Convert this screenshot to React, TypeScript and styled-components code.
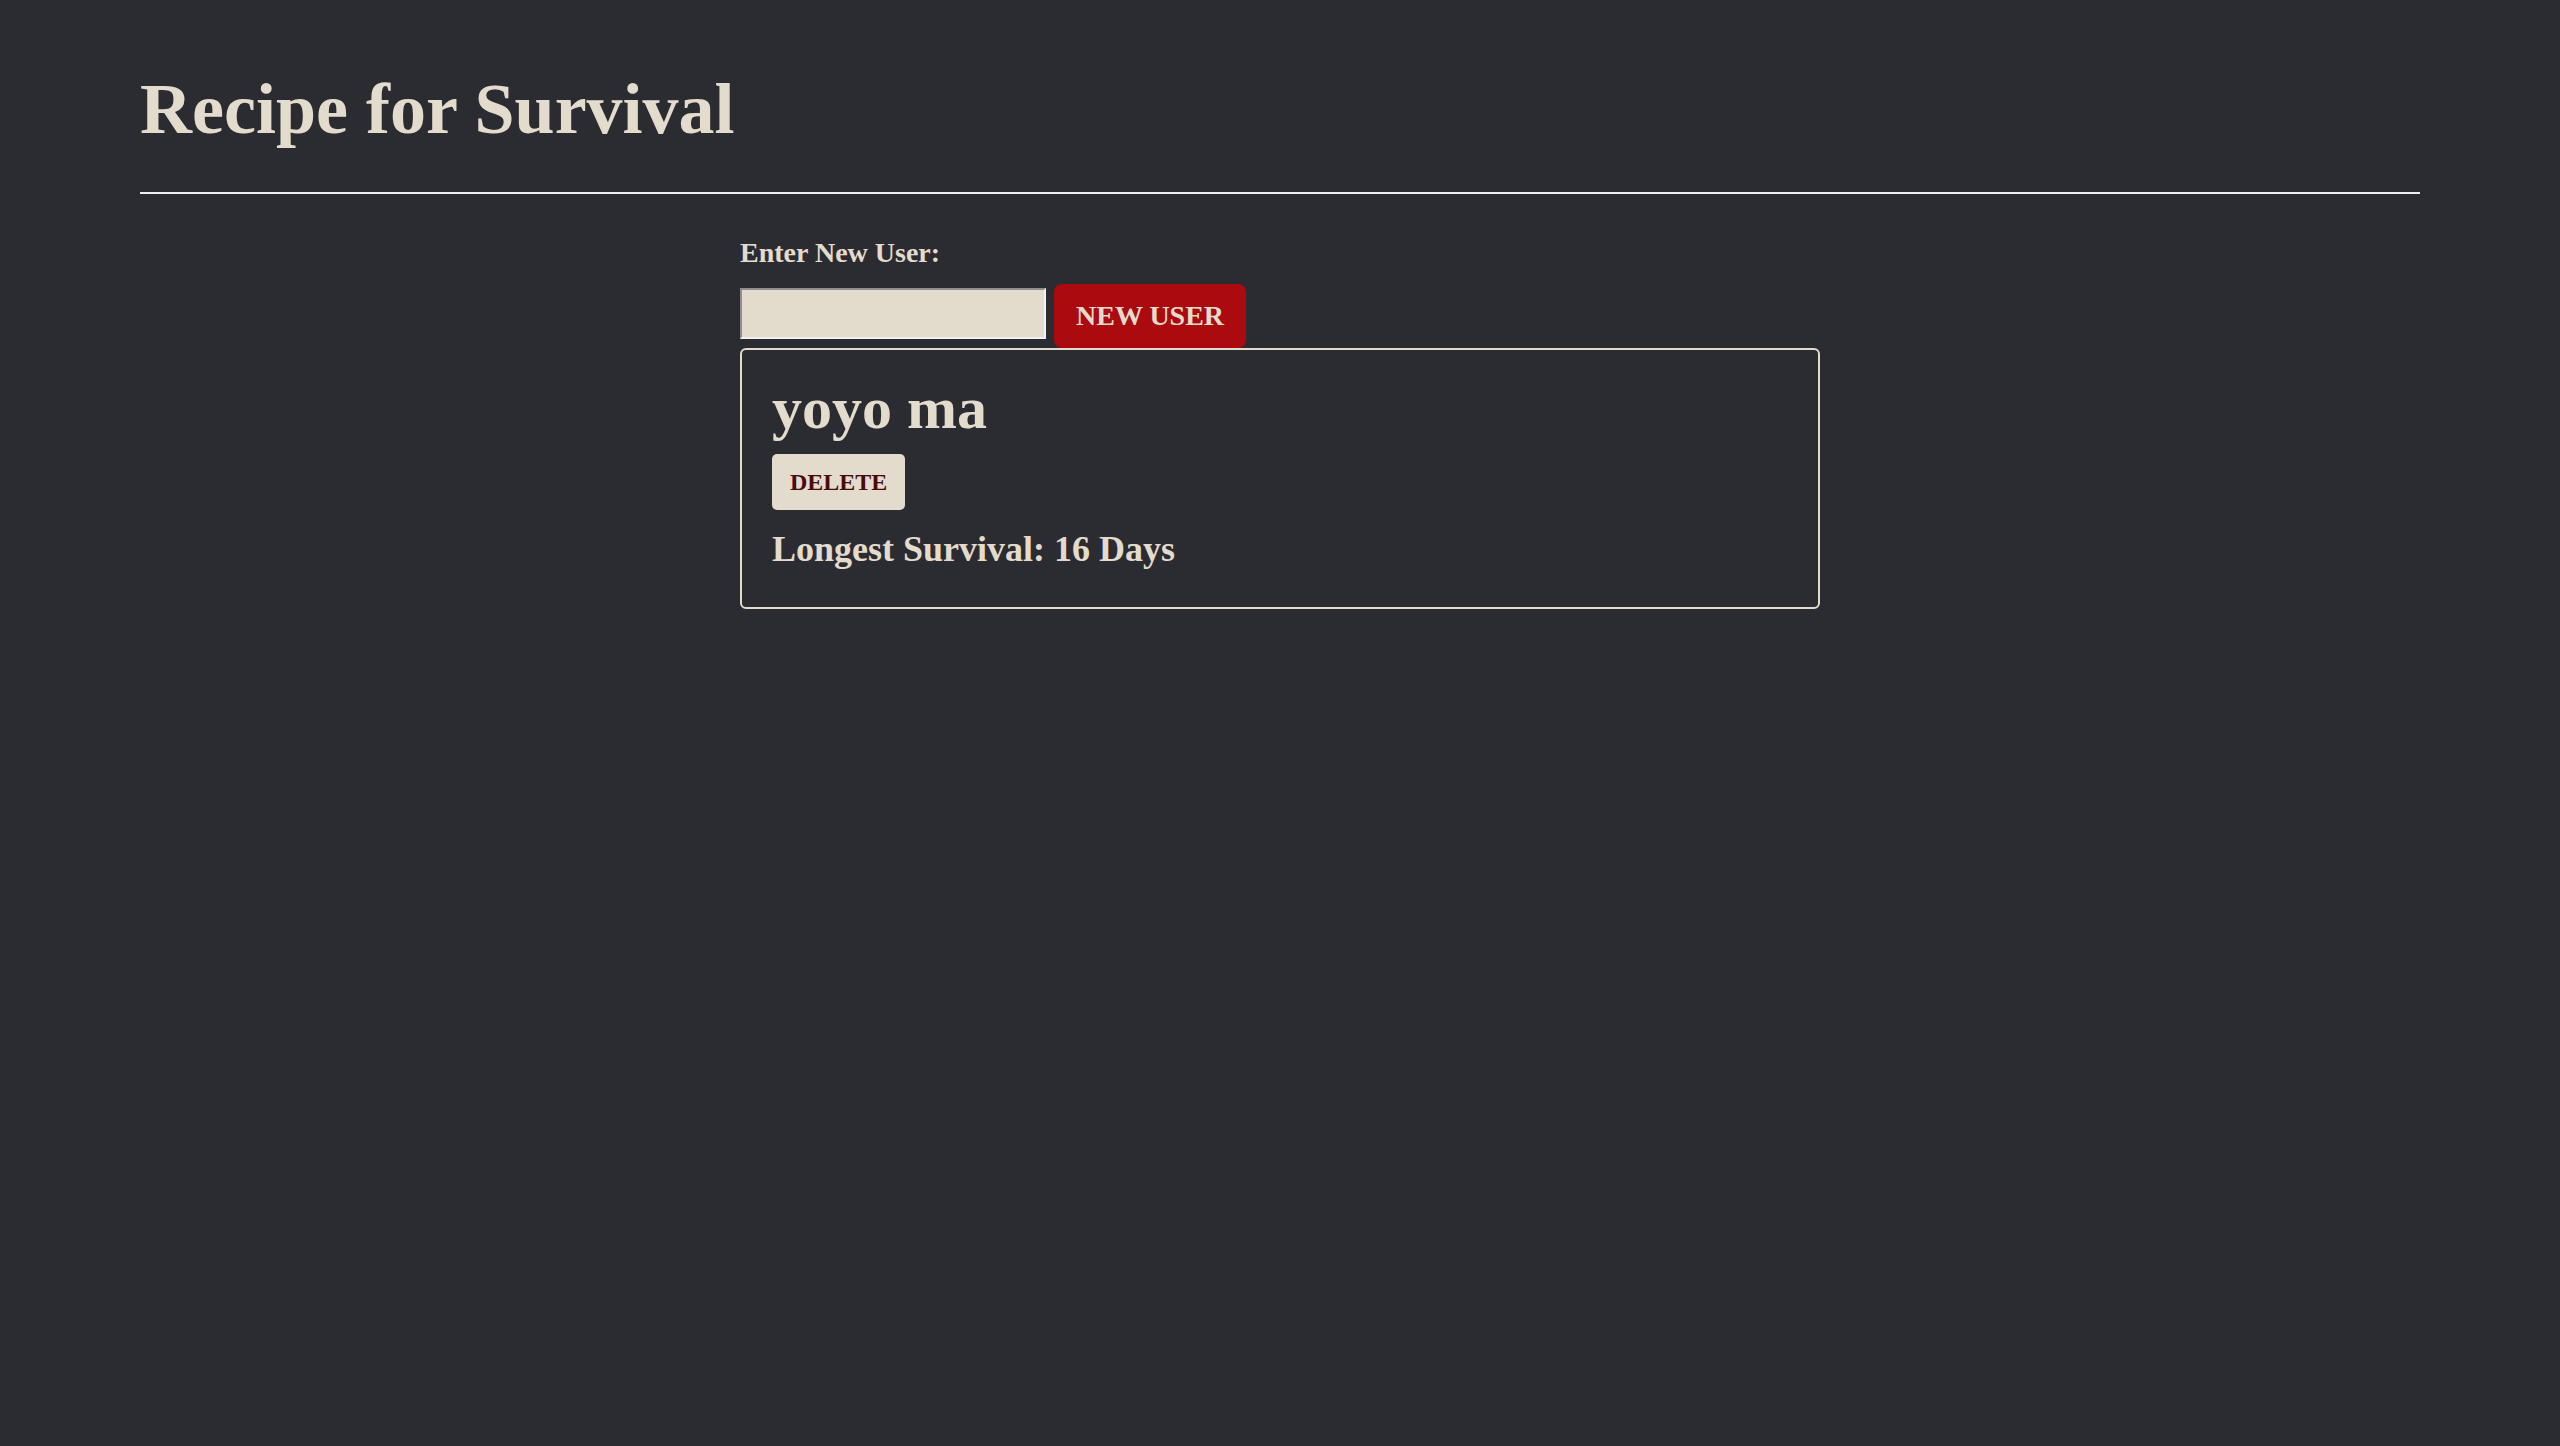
import styled, { createGlobalStyle } from "styled-components";

const GlobalStyle = createGlobalStyle`
  html, body {
    margin: 0;
    padding: 0;
    background-color: #2b2c32;
    min-height: 100%;
  }
  body {
    font-family: "Liberation Serif", "Times New Roman", serif;
    color: #e3dbcc;
  }
`;

const Page = styled.div`
  min-height: 1446px;
  background-color: #2b2c32;
  padding: 73px 140px 0;
  box-sizing: border-box;
`;

const Title = styled.h1`
  margin: 0;
  font-size: 72px;
  line-height: 1;
  font-weight: bold;
  color: #e3dbcc;
`;

const Rule = styled.hr`
  margin: 47px 0 0;
  border: none;
  border-top: 2px solid #eeeeee;
  height: 0;
`;

const Main = styled.main`
  width: 1080px;
  margin: 0 auto;
  display: flex;
  flex-direction: column;
`;

const Label = styled.label`
  margin-top: 45px;
  font-size: 28px;
  line-height: 1;
  font-weight: bold;
`;

const InputRow = styled.div`
  display: flex;
  align-items: flex-start;
  gap: 8px;
  margin-top: 17px;
`;

const NameInput = styled.input`
  box-sizing: border-box;
  width: 306px;
  height: 51px;
  margin-top: 4px;
  background-color: #e3dbcc;
  border-width: 2px;
  border-style: solid;
  border-color: #8e8e8e #f2f2f2 #f2f2f2 #8e8e8e;
  padding: 0 8px;
  font-family: inherit;
  font-size: 24px;
`;

const Button = styled.button<{ $variant: "add" | "delete" }>`
  box-sizing: border-box;
  border: none;
  font-family: "Liberation Serif", "Times New Roman", serif;
  font-weight: bold;
  line-height: 1;
  cursor: pointer;
  background-color: ${(p) => (p.$variant === "add" ? "#ab0a0e" : "#e3dbcc")};
  color: ${(p) => (p.$variant === "add" ? "#e3dbcc" : "#4a0b0c")};
  font-size: ${(p) => (p.$variant === "add" ? "28px" : "24px")};
  height: ${(p) => (p.$variant === "add" ? "64px" : "56px")};
  padding: ${(p) => (p.$variant === "add" ? "0 22px" : "0 18px")};
  border-radius: ${(p) => (p.$variant === "add" ? "8px" : "5px")};
`;

const Card = styled.section`
  border: 2px solid #e3dbcc;
  border-radius: 6px;
  padding: 28px 30px 40px;
  display: flex;
  flex-direction: column;
  align-items: flex-start;
`;

const UserName = styled.h2`
  margin: 0 0 16px;
  font-size: 60px;
  line-height: 1;
  font-weight: bold;
`;

const Stat = styled.p`
  margin: 21px 0 0;
  font-size: 36px;
  line-height: 1;
  font-weight: bold;
`;

export default function App() {
  return (
    <>
      <GlobalStyle />
      <Page>
        <Title>Recipe for Survival</Title>
        <Rule />
        <Main>
          <Label htmlFor="new-user">Enter New User:</Label>
          <InputRow>
            <NameInput id="new-user" type="text" />
            <Button $variant="add">NEW USER</Button>
          </InputRow>
          <Card>
            <UserName>yoyo ma</UserName>
            <Button $variant="delete">DELETE</Button>
            <Stat>Longest Survival: 16 Days</Stat>
          </Card>
        </Main>
      </Page>
    </>
  );
}
